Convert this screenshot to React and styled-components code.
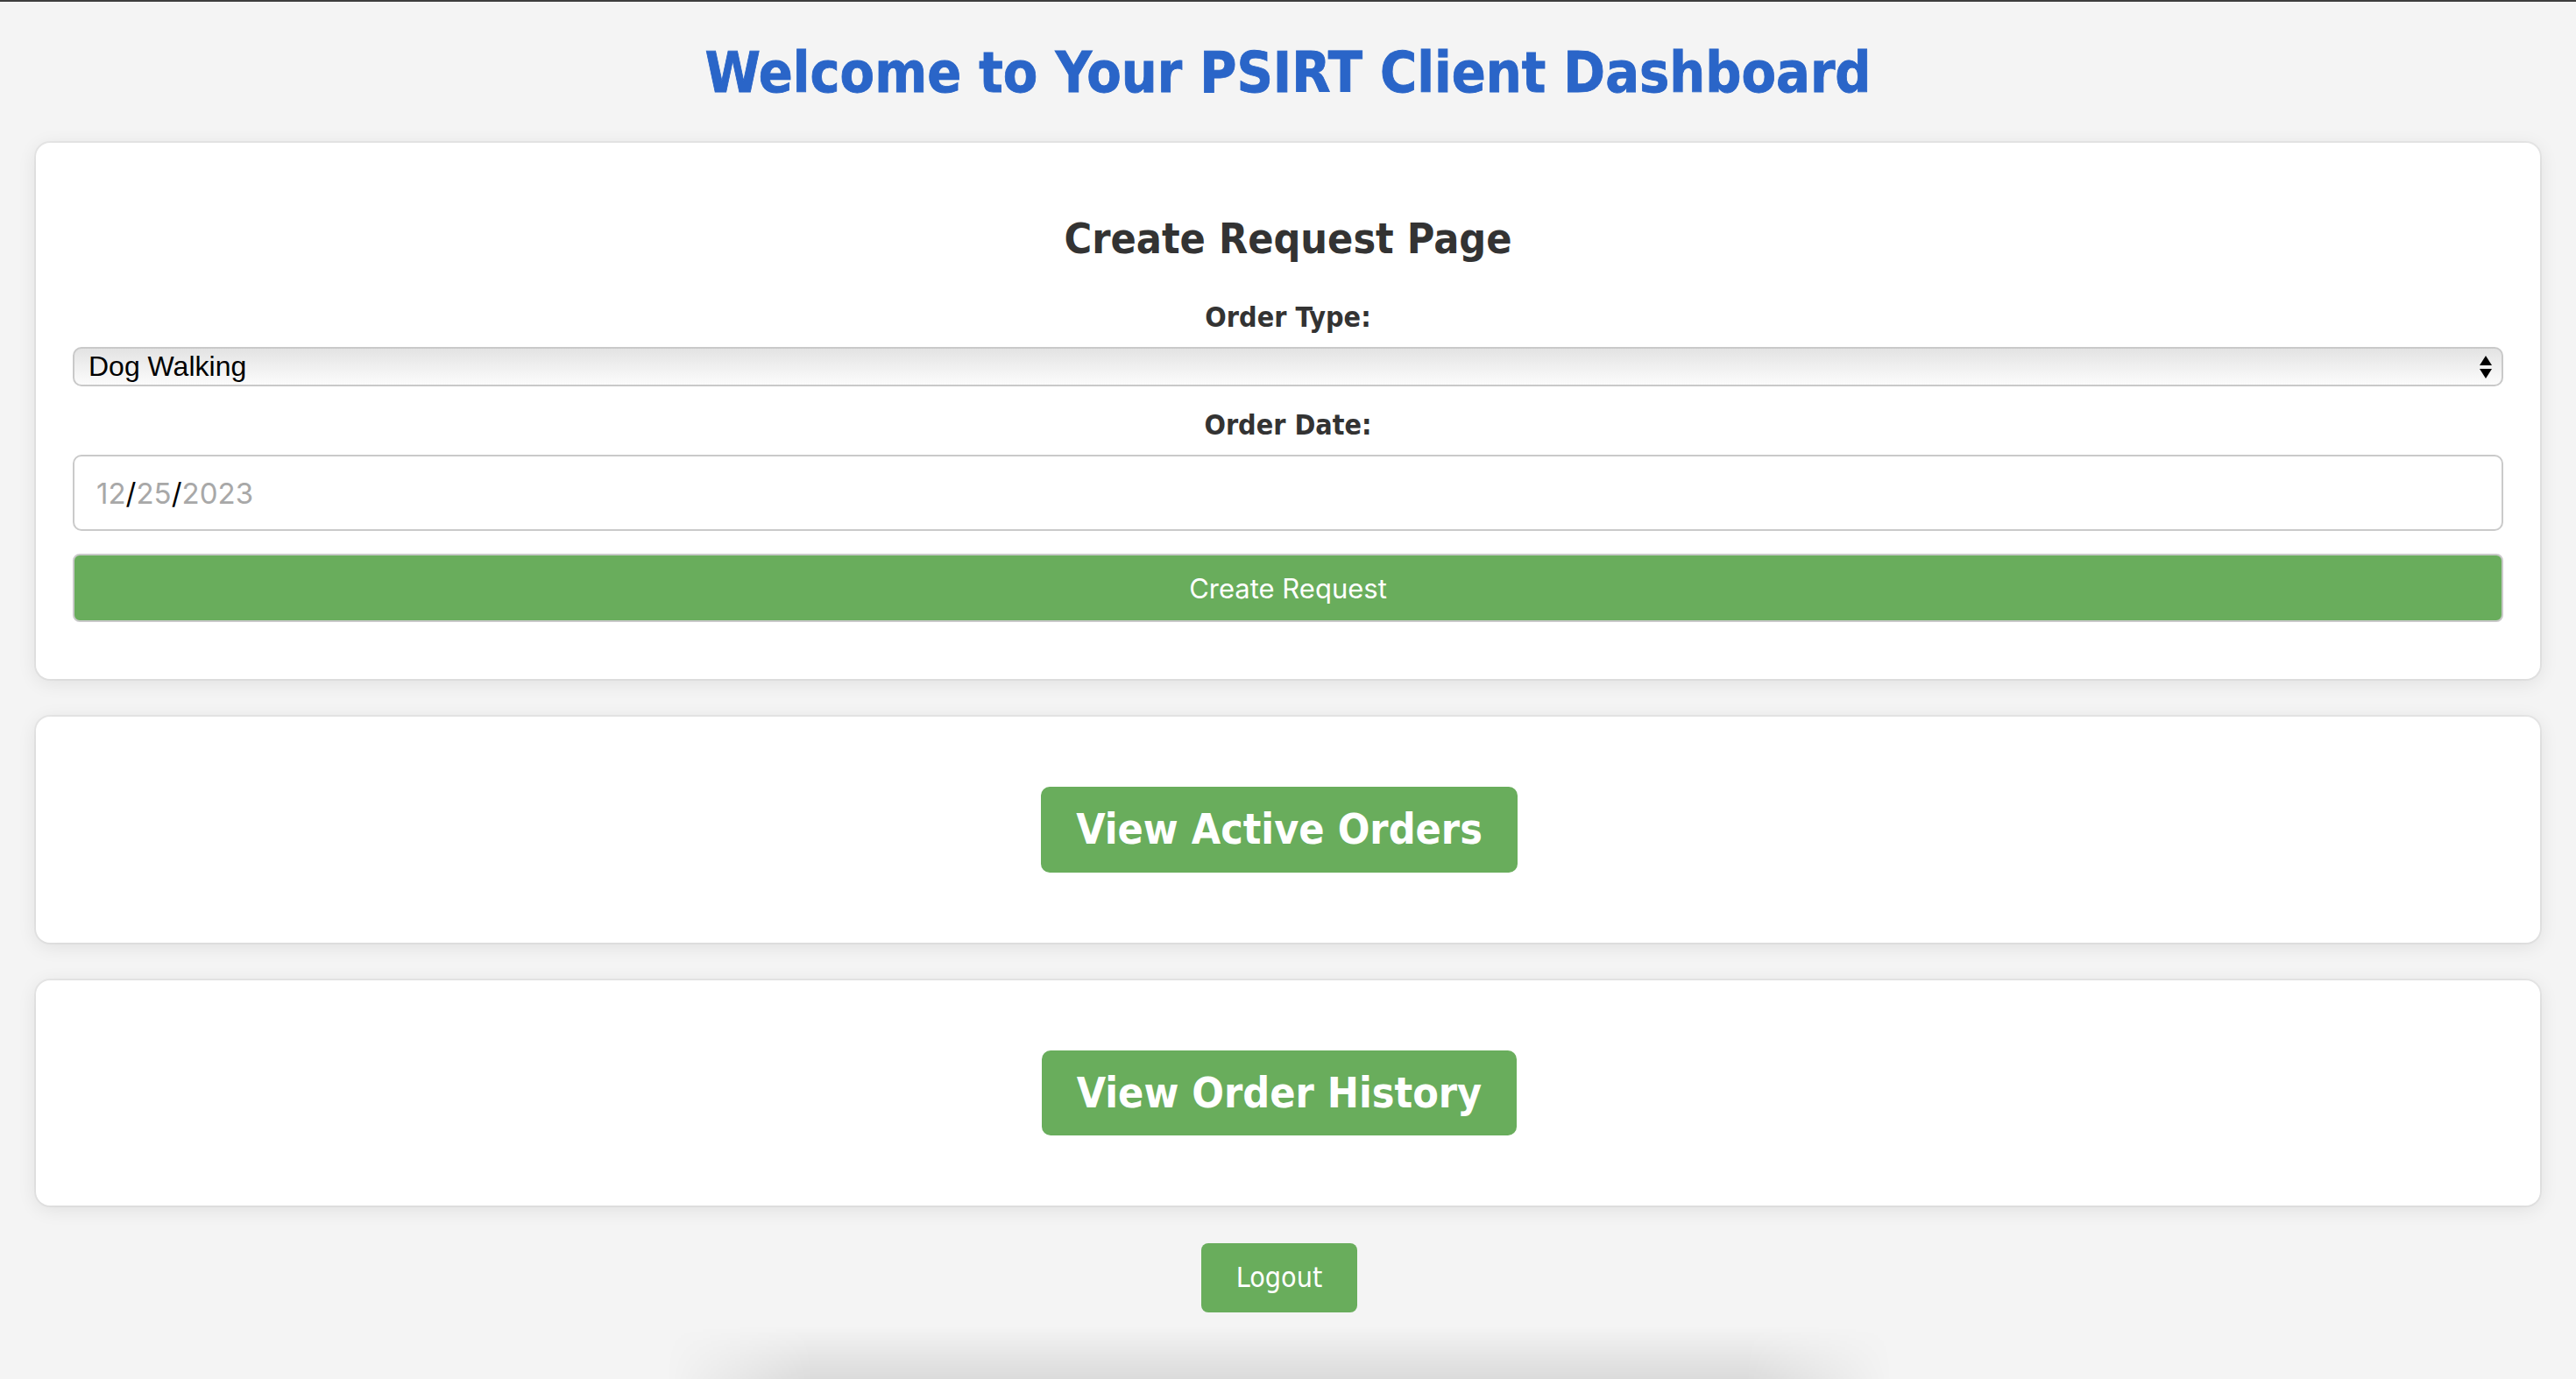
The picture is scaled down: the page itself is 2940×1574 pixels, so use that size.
import React from 'react'
import styled, { createGlobalStyle } from "styled-components"

const GlobalStyle = createGlobalStyle`
  *{
    box-sizing: border-box;
  }
  body{
    margin: 0;
    min-height: 100vh;
    background-color: #f4f4f4;
    border-top: 2px solid #3d3d3d;
    font-family: "DejaVu Sans Condensed", "DejaVu Sans", sans-serif;
  }
`

const App = () => {
  return (
    <>
      <GlobalStyle />
      <Page>
        <Title>Welcome to Your PSIRT Client Dashboard</Title>

        <Card $pad="40px 42px">
          <Heading>Create Request Page</Heading>
          <Label htmlFor="orderType">Order Type:</Label>
          <SelectWrap>
            <Select id="orderType" defaultValue="dog">
              <option value="dog">Dog Walking</option>
              <option value="sit">Pet Sitting</option>
              <option value="groom">Grooming</option>
            </Select>
            <Arrows width="16" height="28" viewBox="0 0 16 28">
              <path d="M8 1 L15 12 L1 12 Z" fill="#000" />
              <path d="M1 16 L15 16 L8 27 Z" fill="#000" />
            </Arrows>
          </SelectWrap>
          <Label $gap="15px">Order Date:</Label>
          <DateField>
            <Segment>12</Segment><Sep>/</Sep><Segment>25</Segment><Sep>/</Sep><Segment>2023</Segment>
          </DateField>
          <SubmitButton>Create Request</SubmitButton>
        </Card>

        <Card $pad="80px 0">
          <BigButton>View Active Orders</BigButton>
        </Card>

        <Card $pad="80px 0">
          <BigButton>View Order History</BigButton>
        </Card>

        <Footer>
          <LogoutButton>Logout</LogoutButton>
        </Footer>
      </Page>
      <DockShadow />
    </>
  )
}

export default App

const Page = styled.div`
  padding: 0 41px 40px;
`
const Title = styled.h1`
  margin: 43px 0 41px;
  text-align: center;
  font-size: 64px;
  line-height: 1.2;
  font-weight: bold;
  color: #2a65c8;
  -webkit-text-stroke: 0.8px #2a65c8;
`
const Card = styled.section`
  display: flex;
  flex-direction: column;
  align-items: ${(p) => (p.$pad === "80px 0" ? "center" : "stretch")};
  padding: ${(p) => p.$pad};
  margin-bottom: 43px;
  background-color: #fff;
  border-radius: 16px;
  box-shadow: 0 0 0 2px rgba(0, 0, 0, 0.045), 0 4px 22px rgba(0, 0, 0, 0.09);
`
const Heading = styled.h2`
  margin: 41px 0 42px;
  text-align: center;
  font-size: 48px;
  line-height: 1.2;
  font-weight: bold;
  color: #333;
`
const Label = styled.label`
  display: block;
  margin-bottom: ${(p) => p.$gap || "14px"};
  text-align: center;
  font-size: 32px;
  line-height: 1.2;
  font-weight: bold;
  color: #333;
`
const SelectWrap = styled.div`
  position: relative;
  margin-bottom: 25px;
`
const Select = styled.select`
  appearance: none;
  display: block;
  width: 100%;
  height: 45px;
  padding: 0 60px 0 16px;
  border: 2px solid #c9c9c9;
  border-radius: 10px;
  background: linear-gradient(#e3e3e3, #f2f2f2 60%, #fbfbfb);
  font-family: "Liberation Sans", Arial, sans-serif;
  font-size: 32px;
  color: #000;
`
const Arrows = styled.svg`
  position: absolute;
  right: 12px;
  top: 9px;
  pointer-events: none;
`
const DateField = styled.div`
  display: flex;
  align-items: center;
  height: 87px;
  padding: 0 25px;
  margin-bottom: 26px;
  border: 2px solid #cacaca;
  border-radius: 10px;
  background-color: #fff;
  font-family: Inter, "Noto Sans", sans-serif;
  font-size: 33px;
`
const Segment = styled.span`
  color: #a8a8a8;
`
const Sep = styled.span`
  color: #000;
`
const SubmitButton = styled.button`
  height: 78px;
  margin-bottom: 25px;
  border: 2px solid #c9c9c9;
  border-radius: 8px;
  background-color: #69ad5c;
  color: #fff;
  font-family: Inter, "Noto Sans", sans-serif;
  font-size: 31px;
  cursor: pointer;
`
const BigButton = styled.button`
  margin-right: 20px;
  padding: 20px 40px;
  border: none;
  border-radius: 10px;
  background-color: #69ad5c;
  color: #fff;
  font-family: "DejaVu Sans Condensed", "DejaVu Sans", sans-serif;
  font-size: 48px;
  line-height: 1.2;
  font-weight: bold;
  cursor: pointer;
`
const Footer = styled.div`
  display: flex;
  justify-content: center;
`
const LogoutButton = styled.button`
  margin-right: 20px;
  padding: 20px 40px;
  border: none;
  border-radius: 8px;
  background-color: #69ad5c;
  color: #fff;
  font-family: "DejaVu Sans Condensed", "DejaVu Sans", sans-serif;
  font-size: 32px;
  line-height: 1.2;
  cursor: pointer;
`
const DockShadow = styled.div`
  position: fixed;
  left: 760px;
  right: 780px;
  bottom: 0;
  height: 60px;
  pointer-events: none;
  background: linear-gradient(rgba(0, 0, 0, 0), rgba(0, 0, 0, 0.1));
  -webkit-mask-image: linear-gradient(90deg, transparent, #000 12%, #000 88%, transparent);
  mask-image: linear-gradient(90deg, transparent, #000 12%, #000 88%, transparent);
`
